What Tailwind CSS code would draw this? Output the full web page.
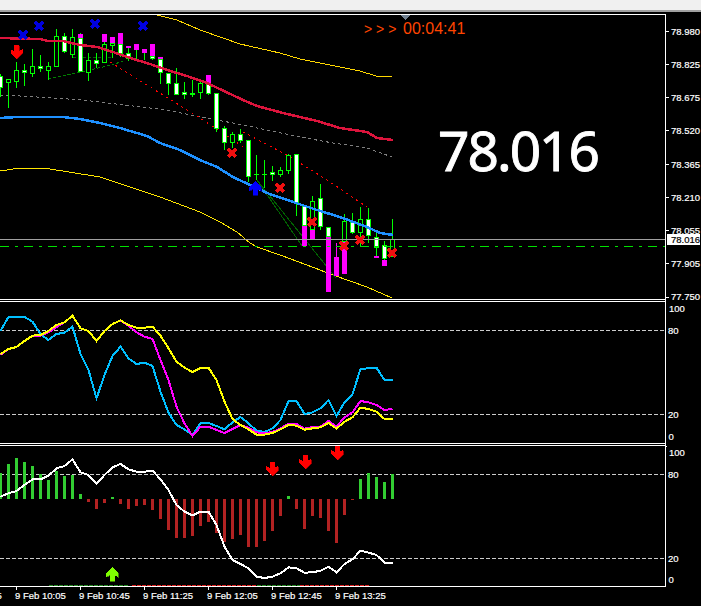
<!DOCTYPE html>
<html lang="en">
<head>
  <meta charset="UTF-8" />
  <title>USDJPY M5</title>
  <script src="https://cdn.jsdelivr.net/npm/@tailwindcss/browser@4"></script>
</head>
<body class="bg-black w-[701px] h-[606px] overflow-hidden font-['Liberation_Sans',sans-serif]">
  <div class="h-[10px] bg-[#f0f0f0]"></div>
  <div class="h-[2px] bg-[#a0a0a0]"></div>

  <!-- main price pane -->
  <svg id="main" class="block" width="701" height="290" viewBox="0 12 701 290" shape-rendering="crispEdges">
    <g id="mainShapes"></g>
    <polygon points="401,15 410,15 405.5,20" fill="#708090" />
    <g font-size="14" fill="#ff4500"><text x="364" y="34">&gt; &gt; &gt;</text></g>
    <text x="403" y="34" font-size="16" fill="#ff4500">00:04:41</text>
    <text x="438" y="170.5" font-size="55" letter-spacing="-2" fill="#ffffff" stroke="#ffffff" stroke-width="0.9" font-family="Noto Sans">78.016</text>
    <g font-size="9.5" fill="#ffffff" stroke="#ffffff" stroke-width="0.2">
      <text x="671" y="34.5">78.980</text>
      <text x="671" y="67.5">78.825</text>
      <text x="671" y="101">78.675</text>
      <text x="671" y="134">78.520</text>
      <text x="671" y="167.5">78.365</text>
      <text x="671" y="200.5">78.210</text>
      <text x="671" y="233.5">78.055</text>
      <text x="671" y="266.5">77.905</text>
      <text x="671" y="300">77.750</text>
    </g>
    <rect x="667" y="234" width="33" height="11" fill="#ffffff" />
    <text x="671" y="243" font-size="9.5" fill="#000000" stroke="#000000" stroke-width="0.2">78.016</text>
  </svg>

  <!-- oscillator pane -->
  <svg id="osc" class="block" width="701" height="144" viewBox="0 302 701 144" shape-rendering="crispEdges">
    <g id="oscShapes"></g>
    <g font-size="9.5" fill="#ffffff" stroke="#ffffff" stroke-width="0.2">
      <text x="669" y="311.5">100</text>
      <text x="668" y="333.5">80</text>
      <text x="668" y="417.5">20</text>
      <text x="668.5" y="440">0</text>
    </g>
  </svg>

  <!-- histogram pane + time axis -->
  <svg id="hist" class="block" width="701" height="160" viewBox="0 446 701 160" shape-rendering="crispEdges">
    <g id="histShapes"></g>
    <g font-size="9.5" fill="#ffffff" stroke="#ffffff" stroke-width="0.2">
      <text x="669" y="455.5">100</text>
      <text x="668" y="478">80</text>
      <text x="668" y="561.5">20</text>
      <text x="668.5" y="583">0</text>
      <text x="-49" y="599">9 Feb 09:25</text>
      <text x="15" y="599">9 Feb 10:05</text>
      <text x="79" y="599">9 Feb 10:45</text>
      <text x="143" y="599">9 Feb 11:25</text>
      <text x="207" y="599">9 Feb 12:05</text>
      <text x="271" y="599">9 Feb 12:45</text>
      <text x="335" y="599">9 Feb 13:25</text>
    </g>
  </svg>

  <script>
    // values read off the chart, y in 3x pixels: [bodyTop, bodyBottom, wickTop, wickBottom, type, magentaTop, magentaBottom]
    const candles = [
      [228,265,222,292,'w'],[238,250,238,323,'h'],[211,245,186,263,'h'],[211,220,193,258,'w'],[199,221,148,231,'h'],
      [199,206,165,216,'w'],[199,212,187,240,'h'],[109,200,87,200,'h'],[109,155,99,159,'w'],[112,166,88,173,'h'],
      [113,215,100,215,'w',102,113],[181,220,159,243,'h'],[181,193,160,205,'w'],[133,188,121,190,'h',102,126],[128,137,112,173,'h',111,128],
      [133,163,99,172,'w',99,133],[160,178,138,182,'w',138,144],[150,150,150,180,'n',132,150],[159,159,159,180,'n',147,159],[168,176,168,180,'w',132,168],
      [176,220,176,251,'w',171,176],[220,251,220,285,'w'],[250,284,205,284,'w'],[277,284,247,296,'w'],[280,285,240,290,'f'],
      [248,278,240,296,'h'],[250,281,250,285,'w',225,250],[280,386,280,395,'w'],[385,428,378,450,'w'],[403,428,395,443,'h'],
      [403,422,388,430,'w'],[421,530,421,546,'w'],[522,525,465,540,'f'],[522,525,480,563,'f'],[517,524,498,543,'w'],
      [511,524,501,531,'h'],[466,513,463,522,'h'],[463,612,463,648,'w'],[615,678,615,678,'w',678,738],[604,690,588,690,'h',690,720],
      [595,680,552,690,'w'],[680,712,680,712,'w',712,875],[771,771,730,771,'m',771,828],[663,725,642,740,'h',725,822],[666,698,639,702,'w'],
      [658,698,621,738,'h'],[658,707,623,730,'w'],[712,743,697,768,'w',768,774],[736,778,722,780,'w',780,797],[718,772,657,772,'h']
    ];

    const redMa = [[0,38],[40,39],[48,41],[63,41],[80,45],[97,47],[113,52],[130,58],[150,64],[167,70],[187,76],[207,83],[243,100],[257,106],[283,113],[317,121],[340,128],[367,132],[377,138],[393,140]];
    const blueMa = [[0,118],[17,117],[63,117],[80,119],[100,123],[120,128],[147,136],[160,143],[180,150],[200,160],[217,167],[233,177],[250,185],[267,193],[293,202],[317,210],[340,217],[367,227],[380,233],[393,235]];
    const upperBand = [[157,15],[177,20],[200,30],[240,44],[280,53],[300,59],[340,67],[360,71],[376,76],[392,77]];
    const lowerBand = [[0,171],[20,168],[50,169],[100,177],[130,187],[160,197],[200,212],[220,222],[237,232],[250,243],[257,247],[280,255],[307,265],[333,275],[367,287],[392,298]];
    const midBand = [[0,95],[20,96],[37,97],[83,100],[133,106],[167,110],[200,117],[233,123],[267,130],[300,137],[333,143],[367,148],[392,157]];

    const oscBlue = [108,66,66,66,80,117,135,117,113,95,177,225,310,240,183,155,190,207,203,213,290,353,390,403,420,384,384,393,403,382,366,385,407,411,400,375,318,318,357,352,340,315,363,322,298,222,220,218,255,255];
    const oscMagenta = [180,162,156,138,122,122,112,96,82,62,100,108,138,108,87,76,92,112,125,132,195,255,335,385,423,395,395,405,414,402,390,398,412,415,411,400,386,387,401,396,395,378,395,367,352,318,322,330,345,342];
    const oscYellow = [177,162,156,138,122,120,108,90,82,62,100,108,138,108,87,76,90,98,98,95,122,160,200,218,231,219,218,255,320,372,390,403,419,419,414,403,390,392,404,400,397,384,401,380,367,338,342,350,372,372];
    const histWhite = [170,160,153,135,118,118,107,85,78,58,97,105,132,105,82,72,88,95,95,92,118,150,195,215,226,215,215,255,320,360,372,385,410,414,410,400,382,385,398,397,392,380,397,372,358,332,338,345,368,368];
    const histBars = [99,72,54,66,78,102,120,93,108,105,162,186,207,189,171,192,207,198,195,210,237,270,294,294,288,258,246,279,306,297,285,321,321,303,273,228,168,207,267,228,234,273,309,225,179,117,99,111,126,102];

    const rect = (x, y, w, h, fill) => `<rect x="${x}" y="${y}" width="${w}" height="${h}" fill="${fill}"/>`;
    const line = (pts, color, width, dash) =>
      `<polyline points="${pts.map(p => p.join(',')).join(' ')}" fill="none" stroke="${color}" stroke-width="${width}"${dash ? ` stroke-dasharray="${dash}"` : ''}/>`;
    const series = (vals, base) => vals.map((v, k) => [8 * k + 0.5, base + v / 3]);
    const snap = v => Math.round(v / 3);
    // wingdings style arrows, 12 wide and 14 high, with a darker edge at the lower right
    const arrowPath = (cx, y, dir, c) => {
      const p = [[-2.5,0],[2.5,0],[2.5,6],[6,4],[6,8],[0,14],[-6,8],[-6,4],[-2.5,6]];
      return `<polygon points="${p.map(q => `${cx + q[0]},${dir > 0 ? y + q[1] : y + 14 - q[1]}`).join(' ')}" fill="${c}"/>`;
    };
    const downArrow = (cx, top, c, dark) => arrowPath(cx + 0.7, top + 0.7, 1, dark) + arrowPath(cx, top, 1, c);
    const upArrow = (cx, top, c, dark) => arrowPath(cx + 0.7, top + 0.7, -1, dark) + arrowPath(cx, top, -1, c);
    const cross = (cx, cy, c) =>
      `<path d="M${cx-4} ${cy-4}L${cx+4} ${cy+4}M${cx+4} ${cy-4}L${cx-4} ${cy+4}" stroke="${c}" stroke-width="3" fill="none"/>`;

    // main pane
    let s = '';
    s += rect(0, 14, 665, 1, '#fff');
    s += line(midBand, '#808080', 1, '3 3');
    s += line(upperBand, '#ffd700', 1);
    s += line(lowerBand, '#ffe600', 1);
    s += line([[110,62],[200,118],[233,140],[248,150]], '#ff0000', 1, '2 4');
    s += line([[243,132],[287,155],[327,180],[367,207]], '#ff0000', 1, '2 4');
    s += line([[48,79],[80,72],[112,65],[123,61]], '#008000', 1, '3 2');
    s += line([[73,57],[113,57]], '#006400', 1, '3 2');
    s += line([[257,180],[302,246]], '#006400', 1);
    s += line([[257,180],[336,278]], '#006400', 1);

    candles.forEach((c, k) => {
      const [bt, bb, wt, wb, type, mt, mb] = c;
      const x = 8 * k;
      s += rect(x, snap(wt), 1, snap(wb) - snap(wt), type === 'm' ? '#ff00ff' : '#00ff00');
      if (mt) s += rect(x - 2, snap(mt), 5, snap(mb) - snap(mt), '#ff00ff');
      if (type === 'n' || type === 'm') return;
      const t = snap(bt), h = Math.max(snap(bb) - t, 1);
      s += rect(x - 2, t, 5, h, '#00ff00');
      if (h > 2 && type !== 'f') s += rect(x - 1, t + 1, 3, h - 2, type === 'w' ? '#fff' : '#000');
    });

    s += line(redMa, '#dc143c', 2.5);
    s += line(blueMa, '#1e90ff', 2.5);
    s += rect(0, 239, 665, 1, '#a0a0a0');
    s += line([[0,246.5],[665,246.5]], '#00e000', 1, '9 6 3 6');
    [[23,35],[39,26],[95,24],[143,26]].forEach(p => s += cross(p[0], p[1], '#0000e0'));
    [[232,153],[280,188],[312,222],[344,246],[360,240],[392,253]].forEach(p => s += cross(p[0], p[1], '#f01010'));
    s += downArrow(16.5, 45, '#ff0000', '#900000');
    s += upArrow(255, 181, '#0000ff', '#000080');

    // axis of the main pane
    s += rect(665, 14, 1, 288, '#fff');
    [31,64,97,130,164,197,230,263,297].forEach(y => s += rect(666, y, 3, 1, '#fff'));
    s += rect(0, 299, 665, 1, '#fff') + rect(0, 301, 665, 1, '#fff');
    document.getElementById('mainShapes').innerHTML = s;

    // oscillator pane
    s = '';
    s += line([[0,330.5],[665,330.5]], '#cccccc', 1, '4 2');
    s += line([[0,414.5],[665,414.5]], '#cccccc', 1, '4 2');
    s += line(series(oscBlue, 295), '#00bfff', 2);
    s += line(series(oscMagenta, 295), '#ff00ff', 2);
    s += line(series(oscYellow, 295), '#ffff00', 2);
    s += rect(665, 302, 1, 144, '#fff');
    s += rect(0, 443, 665, 1, '#fff') + rect(0, 445, 665, 1, '#fff');
    document.getElementById('oscShapes').innerHTML = s;

    // histogram pane
    s = '';
    s += line([[0,474.5],[665,474.5]], '#cccccc', 1, '4 2');
    s += line([[0,558.5],[665,558.5]], '#cccccc', 1, '4 2');
    histBars.forEach((v, k) => {
      const y = snap(v) + 440, base = 499;
      if (v < 177) s += rect(8 * k - 1, y, 3, base - y, '#32cd32');
      else s += rect(8 * k - 1, base, 3, y - base, '#b22222');
    });
    s += line(series(histWhite, 440), '#ffffff', 2);
    s += upArrow(112, 567, '#7fff00', '#3f8000');
    s += downArrow(272, 462, '#ff0000', '#900000');
    s += downArrow(305, 455, '#ff0000', '#900000');
    s += downArrow(337, 446, '#ff0000', '#900000');
    s += line([[49,585.5],[129,585.5]], '#228b22', 1, '4 1');
    s += line([[132,585.5],[257,585.5]], '#e02020', 1, '4 1');
    s += line([[257,585.5],[300,585.5]], '#228b22', 1, '4 1');
    s += line([[300,585.5],[369,585.5]], '#e02020', 1, '4 1');
    s += rect(0, 586, 666, 1, '#fff');
    s += rect(665, 446, 1, 140, '#fff');
    s += rect(666, 446, 1, 1, '#fff');
    [16,80,144,208,272,336].forEach(x => s += rect(x, 587, 1, 3, '#fff'));
    document.getElementById('histShapes').innerHTML = s;
  </script>
</body>
</html>
